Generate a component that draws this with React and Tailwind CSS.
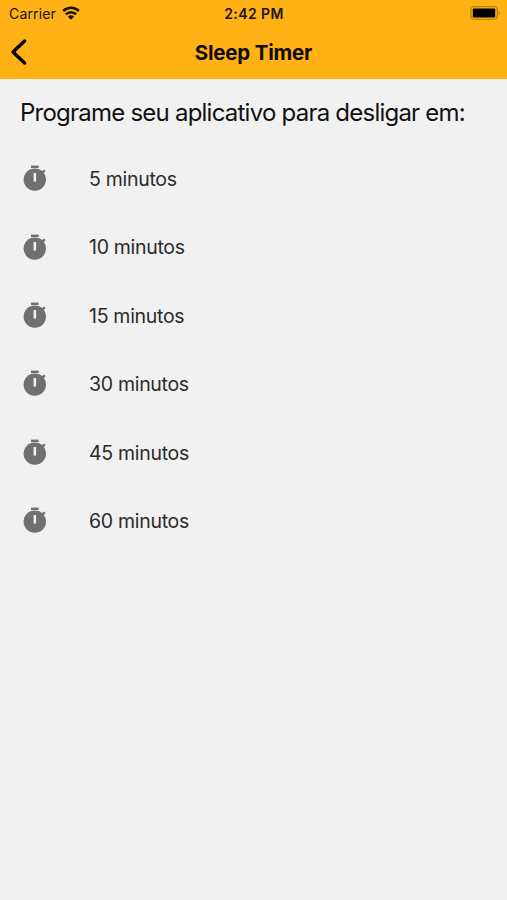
import React from "react";

const minutes = [5, 10, 15, 30, 45, 60];

function WifiIcon() {
  return (
    <svg width="18" height="14" viewBox="0 0 19 15" className="mb-[2px]" fill="none" stroke="#1a1203" strokeWidth="2.8">
      <path d="M1.1 5.4a11.9 11.9 0 0 1 16.8 0" />
      <path d="M4 9a7.8 7.8 0 0 1 11 0" />
      <path d="M9.5 14.6L6.2 11.4a4.6 4.6 0 0 1 6.6 0z" fill="#1a1203" stroke="none" />
    </svg>
  );
}

function BatteryIcon() {
  return (
    <svg width="31" height="14" viewBox="0 0 31 14" className="mb-[1px]">
      <rect x="0.9" y="0.7" width="26.4" height="12.6" rx="3.2" fill="none" stroke="#b98213" strokeWidth="1.3" />
      <rect x="2.8" y="2.4" width="22.4" height="9" rx="1.2" fill="#000" />
      <path d="M28.6 4.8c1.6.7 1.6 3.7 0 4.4z" fill="#b98213" />
    </svg>
  );
}

function TimerIcon() {
  return (
    <svg width="24" height="28" viewBox="0 0 24 28" className="mb-[2px] shrink-0">
      <rect x="8" y="1.6" width="7.6" height="2.4" fill="#707070" />
      <circle cx="11.8" cy="15.6" r="11.2" fill="#707070" />
      <path d="M17.8 8.6l3.2-3.2 1.7 1.7-3.2 3.2z" fill="#707070" />
      <rect x="10.6" y="9" width="2.5" height="8.6" fill="#f1f1f1" />
    </svg>
  );
}

function App() {
  return (
    <div className="min-h-screen bg-[#f1f1f1] font-['Inter',sans-serif]">
      <header className="h-[79px] bg-[#ffb115]">
        <div className="grid h-[27px] grid-cols-3 items-center pl-[9px] pr-[6px] text-[#1a1203]">
          <div className="flex items-center gap-[6px]">
            <span className="text-[14px] tracking-[0.15px]">Carrier</span>
            <WifiIcon />
          </div>
          <span className="pr-[2px] text-center text-[14px] font-semibold tracking-[0.4px]">2:42 PM</span>
          <div className="flex justify-end">
            <BatteryIcon />
          </div>
        </div>
        <div className="grid h-[52px] grid-cols-[40px_1fr_40px] items-center">
          <button aria-label="Voltar" className="pb-[2px] pl-[10px]">
            <svg width="18" height="28" viewBox="0 0 18 28" fill="none" stroke="#000" strokeWidth="3.4" strokeLinecap="round" strokeLinejoin="round">
              <path d="M14.6 3L3 14l11.6 11" />
            </svg>
          </button>
          <h1 className="text-center text-[20.5px] font-bold tracking-[-0.2px] text-[#100b02]">Sleep Timer</h1>
        </div>
      </header>

      <main>
        <h2 className="h-[66px] pl-[20px] pt-[16px] text-[24px] leading-[36px] tracking-[-0.77px] whitespace-nowrap text-[#111]">
          Programe seu aplicativo para desligar em:
        </h2>
        <ul>
          {minutes.map((m) => (
            <li key={m} className="flex h-[68.4px] items-center pl-[23px]">
              <TimerIcon />
              <span className="ml-[42px] pt-[1px] text-[19.5px] tracking-[-0.3px] text-[#2b2b2b]">{m} minutos</span>
            </li>
          ))}
        </ul>
      </main>
    </div>
  );
}

export default App;
